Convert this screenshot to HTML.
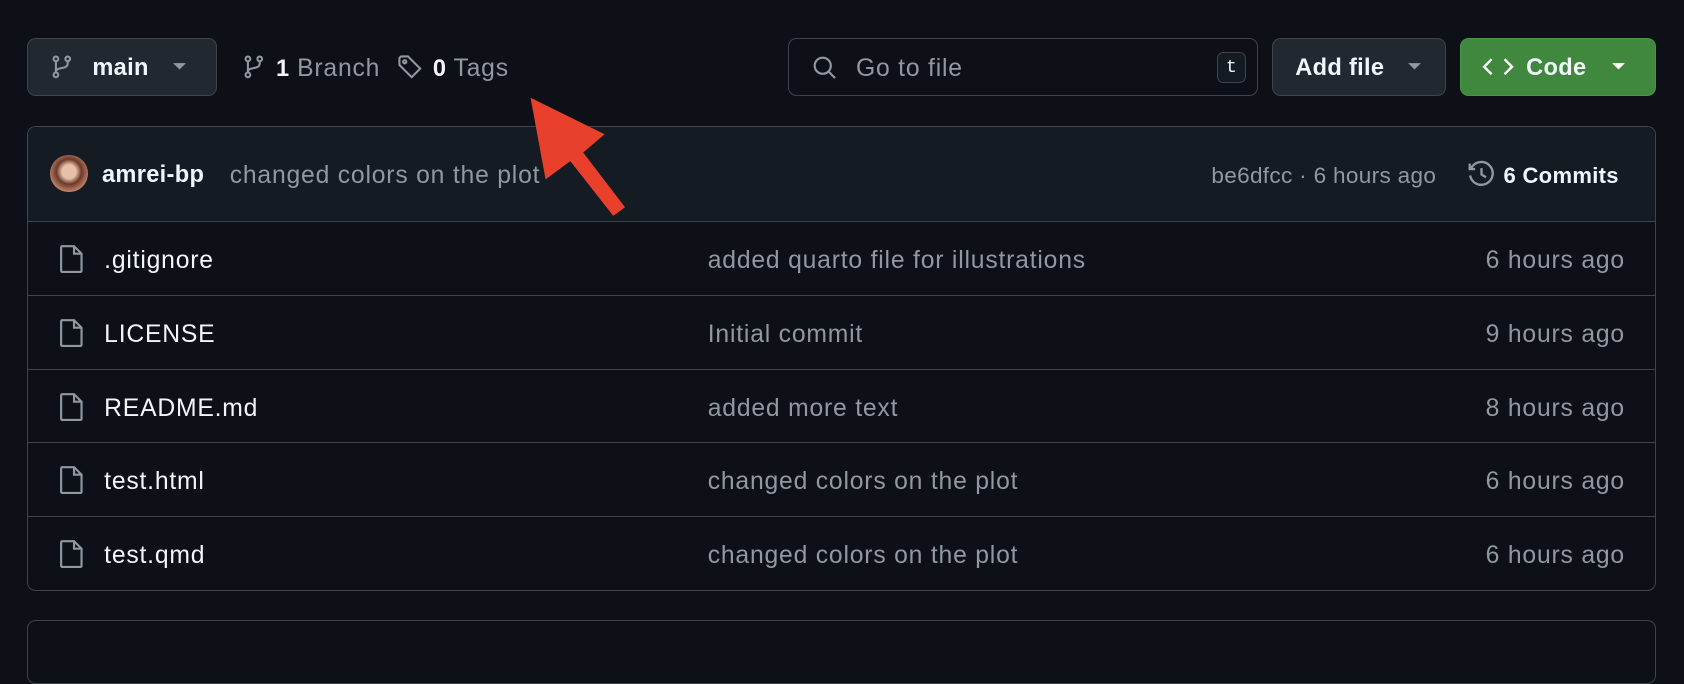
<!DOCTYPE html>
<html><head><meta charset="utf-8"><style>
html{zoom:1.07398}
body{margin:0;width:1568px;height:598px;background:#0d1117;font-family:"Liberation Sans",sans-serif;color:#f0f6fc;position:relative;overflow:hidden}
.a{position:absolute}
.btn{position:absolute;border:1px solid #3d444d;border-radius:8px;background:#212830;box-sizing:border-box}
.t{position:absolute;white-space:nowrap;font-size:23px;line-height:24px;letter-spacing:.75px;margin-top:2px}
.g{color:#9198a1}
.b{font-weight:bold;font-size:22px;letter-spacing:.3px}
.row{position:absolute;left:0;width:100%;height:69px;border-top:1px solid #3d444d}
svg{position:absolute}
</style></head><body>
<div class="btn" style="left:25px;top:35px;width:177px;height:54px"></div>
<svg style="left:47px;top:50px" width="22" height="24" viewBox="0 0 16 16" fill="none" stroke="#9198a1" stroke-width="1.4"><circle cx="4" cy="2.6" r="1.6"/><circle cx="4" cy="13.4" r="1.6"/><circle cx="12" cy="2.6" r="1.6"/><path d="M4 4.2v7.6M12 4.2v1.3c0 2.5-2 3-5 3.5-2 .3-3 1-3 2.5"/></svg>
<div class="t b" style="left:86px;top:50px">main</div>
<svg style="left:160px;top:58px" width="14" height="8"><path d="M1 1h12L7 7z" fill="#9198a1"/></svg>
<svg style="left:225px;top:50px" width="22" height="24" viewBox="0 0 16 16" fill="none" stroke="#9198a1" stroke-width="1.4"><circle cx="4" cy="2.6" r="1.6"/><circle cx="4" cy="13.4" r="1.6"/><circle cx="12" cy="2.6" r="1.6"/><path d="M4 4.2v7.6M12 4.2v1.3c0 2.5-2 3-5 3.5-2 .3-3 1-3 2.5"/></svg>
<div class="t" style="left:257px;top:50px"><span class="b">1</span> <span class="g">Branch</span></div>
<svg style="left:370px;top:50px" width="24" height="24" viewBox="0 0 16 16" fill="none" stroke="#9198a1" stroke-width="1.3"><path d="M1.5 2.5v4.3l7.6 7.6 5.3-5.3-7.6-7.6H2.5z"/><circle cx="4.8" cy="4.8" r="1"/></svg>
<div class="t" style="left:403px;top:50px"><span class="b">0</span> <span class="g">Tags</span></div>
<div class="btn" style="left:734px;top:35px;width:437px;height:54px;background:#0d1117"></div>
<svg style="left:756px;top:51px" width="24" height="24" viewBox="0 0 24 24" fill="none" stroke="#9198a1" stroke-width="2"><circle cx="10" cy="10" r="7.5"/><path d="M15.5 15.5l6 6"/></svg>
<div class="t g" style="left:797px;top:50px">Go to file</div>
<div class="a" style="left:1133px;top:48px;width:27px;height:29px;border:1px solid #3d444d;border-radius:6px;box-sizing:border-box;background:#151b23;font-family:'Liberation Mono',monospace;font-size:17px;line-height:28px;text-align:center;color:#f0f6fc">t</div>
<div class="btn" style="left:1184px;top:35px;width:162px;height:54px"></div>
<div class="t b" style="left:1206px;top:50px">Add file</div>
<svg style="left:1310px;top:58px" width="14" height="8"><path d="M1 1h12L7 7z" fill="#9198a1"/></svg>
<div class="btn" style="left:1359px;top:35px;width:183px;height:54px;background:#3f883d;border-color:#4a9548"></div>
<svg style="left:1380px;top:52px" width="30" height="20" viewBox="0 0 30 20" fill="none" stroke="#fff" stroke-width="2.2"><path d="M9 3L2 10l7 7M21 3l7 7-7 7"/></svg>
<div class="t b" style="left:1421px;top:50px">Code</div>
<svg style="left:1500px;top:58px" width="14" height="8"><path d="M1 1h12L7 7z" fill="#fff"/></svg>
<div class="a" style="left:25px;top:117px;width:1517px;height:433px;border:1px solid #3d444d;border-radius:8px;box-sizing:border-box;overflow:hidden">
 <div class="a" style="left:0;top:0;width:100%;height:88px;background:#151b23"></div>
 <div class="a" style="left:21px;top:26px;width:35px;height:35px;border-radius:50%;background:radial-gradient(circle at 50% 45%,#e8c0a8 0 25%,#6b3a2a 45%,#c98a70 75%,#3d444d 95%)"></div>
 <div class="t b" style="left:69px;top:32px">amrei-bp</div>
 <div class="t g" style="left:188px;top:32px">changed colors on the plot</div>
 <div class="t g" style="left:1102px;top:32px;font-size:21px;letter-spacing:.3px">be6dfcc · 6 hours ago</div>
 <svg style="left:1340px;top:31px" width="27" height="27" viewBox="0 0 16 16" fill="none" stroke="#9198a1" stroke-width="1.3"><path d="M2.3 4.5A6.3 6.3 0 1 1 1.7 8.5"/><path d="M1.5 2v3h3"/><path d="M8 4.5V8l2.5 1.5"/></svg>
 <div class="t b" style="left:1374px;top:32px;font-size:20.5px">6 Commits</div>
 <div class="row" style="top:88px"></div>
 <div class="row" style="top:157px"></div>
 <div class="row" style="top:226px"></div>
 <div class="row" style="top:294px"></div>
 <div class="row" style="top:363px"></div>
</div>
<svg style="left:55px;top:227px" width="24" height="28" viewBox="0 0 24 28" fill="none" stroke="#9198a1" stroke-width="2"><path d="M3 2h11l7 7v16a1 1 0 0 1-1 1H3a1 1 0 0 1-1-1V3a1 1 0 0 1 1-1zM14 2v7h7"/></svg>
<div class="t" style="left:97px;top:229px">.gitignore</div><div class="t g" style="left:659px;top:229px">added quarto file for illustrations</div><div class="t g" style="right:55px;top:229px">6 hours ago</div>
<svg style="left:55px;top:296px" width="24" height="28" viewBox="0 0 24 28" fill="none" stroke="#9198a1" stroke-width="2"><path d="M3 2h11l7 7v16a1 1 0 0 1-1 1H3a1 1 0 0 1-1-1V3a1 1 0 0 1 1-1zM14 2v7h7"/></svg>
<div class="t" style="left:97px;top:298px">LICENSE</div><div class="t g" style="left:659px;top:298px">Initial commit</div><div class="t g" style="right:55px;top:298px">9 hours ago</div>
<svg style="left:55px;top:365px" width="24" height="28" viewBox="0 0 24 28" fill="none" stroke="#9198a1" stroke-width="2"><path d="M3 2h11l7 7v16a1 1 0 0 1-1 1H3a1 1 0 0 1-1-1V3a1 1 0 0 1 1-1zM14 2v7h7"/></svg>
<div class="t" style="left:97px;top:367px">README.md</div><div class="t g" style="left:659px;top:367px">added more text</div><div class="t g" style="right:55px;top:367px">8 hours ago</div>
<svg style="left:55px;top:433px" width="24" height="28" viewBox="0 0 24 28" fill="none" stroke="#9198a1" stroke-width="2"><path d="M3 2h11l7 7v16a1 1 0 0 1-1 1H3a1 1 0 0 1-1-1V3a1 1 0 0 1 1-1zM14 2v7h7"/></svg>
<div class="t" style="left:97px;top:435px">test.html</div><div class="t g" style="left:659px;top:435px">changed colors on the plot</div><div class="t g" style="right:55px;top:435px">6 hours ago</div>
<svg style="left:55px;top:502px" width="24" height="28" viewBox="0 0 24 28" fill="none" stroke="#9198a1" stroke-width="2"><path d="M3 2h11l7 7v16a1 1 0 0 1-1 1H3a1 1 0 0 1-1-1V3a1 1 0 0 1 1-1zM14 2v7h7"/></svg>
<div class="t" style="left:97px;top:504px">test.qmd</div><div class="t g" style="left:659px;top:504px">changed colors on the plot</div><div class="t g" style="right:55px;top:504px">6 hours ago</div>
<div class="a" style="left:25px;top:577px;width:1517px;height:60px;border:1px solid #3d444d;border-radius:8px;box-sizing:border-box"></div>
<svg style="left:0;top:0" width="1568" height="598"><polygon points="494,91 563,125 543,142 582,193 571,201 531,150 508,167" fill="#e8402a"/></svg>
</body></html>
